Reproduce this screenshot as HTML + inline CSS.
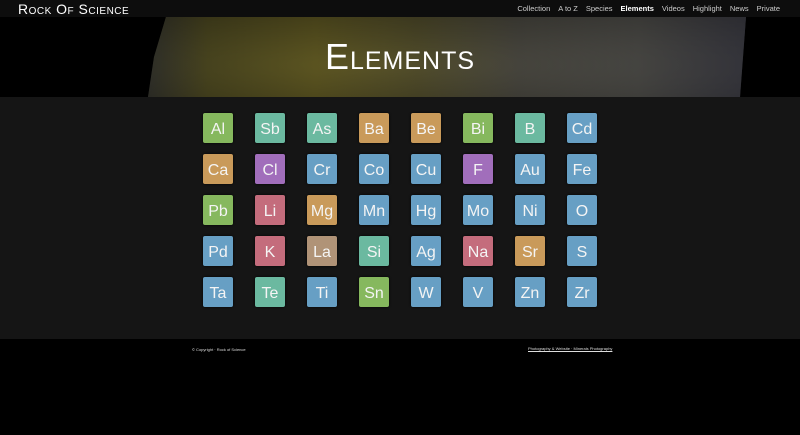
<!DOCTYPE html><html><head><style>
body{margin:0;width:800px;height:435px;background:#000;font-family:"Liberation Sans",sans-serif;overflow:hidden;position:relative}
.top{position:absolute;left:0;top:0;width:800px;height:17px;background:#0d0d0d}
.logo{position:absolute;left:18px;top:1px;color:#fff;font-size:14px;font-variant:small-caps;letter-spacing:.5px}
.nav{position:absolute;right:20px;top:4px;font-size:7.5px;color:#ccc}
.nav span{margin-left:8px}.nav b{color:#fff;margin-left:8px}
.hero{position:absolute;top:17px;left:0;width:800px;height:80px;background:#000;overflow:hidden}
.rock{position:absolute;left:148px;top:0;width:598px;height:80px;background:linear-gradient(90deg,#3e3e36 0%,#5a5526 10%,#6a6226 28%,#5b5630 45%,#55534a 62%,#5e5d58 82%,#4e4e58 100%);clip-path:polygon(3% 0,100% 0,99% 100%,0 100%,1% 50%)}
.rock:after{content:"";position:absolute;inset:0;background:radial-gradient(ellipse at 40% 60%,rgba(0,0,0,.1),rgba(0,0,0,.45))}
.title{position:absolute;left:0;width:800px;top:19px;text-align:center;color:#fff;font-size:36px;font-variant:small-caps;letter-spacing:1px}
.main{position:absolute;top:97px;left:0;width:800px;height:242px;background:#151515}
.t{position:absolute;box-sizing:border-box;width:30px;height:30px;padding-top:9px;border-radius:2px;color:#f4f4f4;font-size:16px;line-height:16px;text-align:center;box-shadow:0 0 2px #000}
.g{background:#86b85e}.c{background:#6bb9a0}.o{background:#c99a5a}.b{background:#679fc4}.p{background:#a16ebb}.r{background:#c46c7c}.n{background:#b09377}
.f1{position:absolute;left:192px;top:347px;font-size:4px;color:#ddd}
.f2{position:absolute;left:528px;top:346px;font-size:4px;color:#ddd;text-decoration:underline}
</style></head><body>
<div class="top"><div class="logo">Rock Of Science</div>
<div class="nav"><span>Collection</span><span>A to Z</span><span>Species</span><b>Elements</b><span>Videos</span><span>Highlight</span><span>News</span><span>Private</span></div></div>
<div class="hero"><div class="rock"></div><div class="title">Elements</div></div>
<div class="main"></div>
<div id="g"></div>
<div class="f1">© Copyright · Rock of Science</div>
<div class="f2">Photography &amp; Website · Minerals Photography</div>
<script>
var d=[["Al g","Sb c","As c","Ba o","Be o","Bi g","B c","Cd b"],["Ca o","Cl p","Cr b","Co b","Cu b","F p","Au b","Fe b"],["Pb g","Li r","Mg o","Mn b","Hg b","Mo b","Ni b","O b"],["Pd b","K r","La n","Si c","Ag b","Na r","Sr o","S b"],["Ta b","Te c","Ti b","Sn g","W b","V b","Zn b","Zr b"]];
var h="";d.forEach(function(r,i){r.forEach(function(e,j){var s=e.split(" ");h+='<div class="t '+s[1]+'" style="left:'+(203+52*j)+'px;top:'+(113+41*i)+'px">'+s[0]+'</div>';});});
document.getElementById("g").innerHTML=h;
</script>
</body></html>
